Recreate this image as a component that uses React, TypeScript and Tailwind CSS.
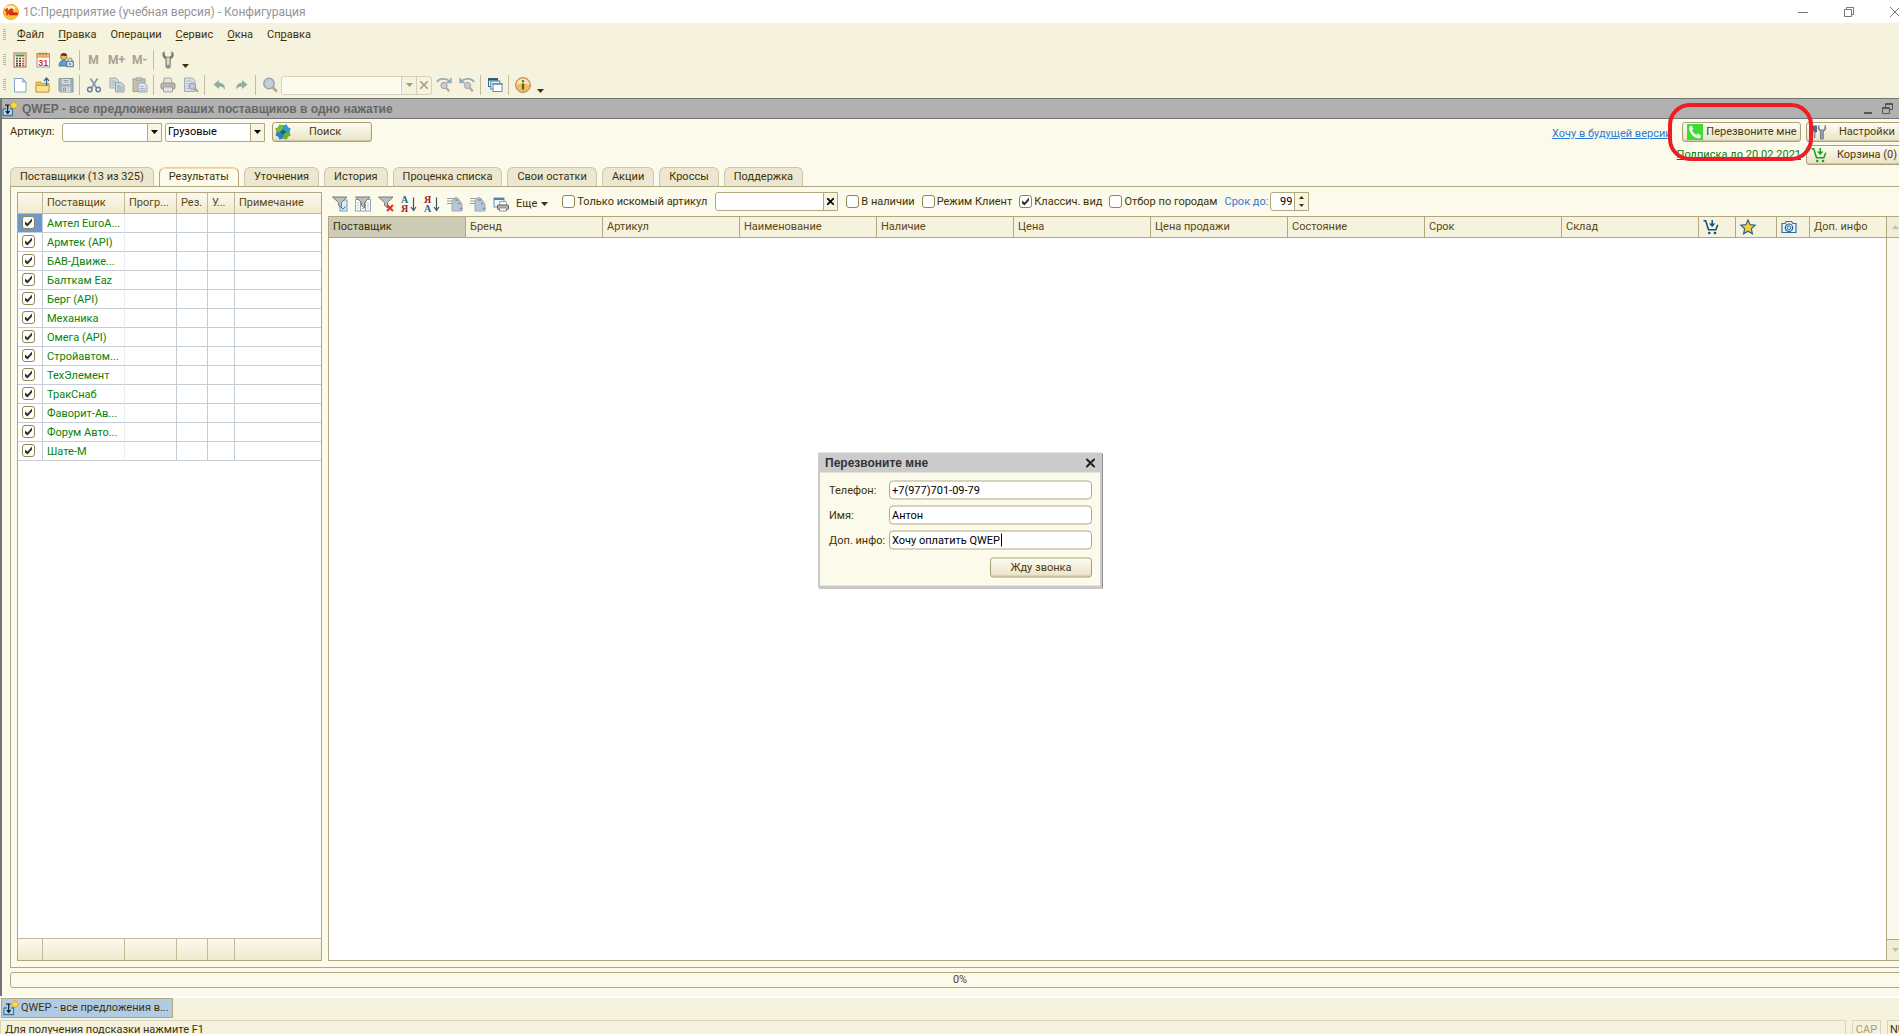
import React, { useState } from "react";

type IconProps = { children: React.ReactNode; size?: 16 | 18 };

const Icon = ({ children, size = 16 }: IconProps) => (
  <svg width={size} height={size} viewBox="0 0 16 16" fill="none" className="shrink-0 overflow-visible" aria-hidden="true">
    {children}
  </svg>
);

/* ---------- icons ---------- */

const LogoIcon = () => (
  <Icon>
    <circle cx="8" cy="8" r="7.6" fill="#f9c62d" stroke="#e2a33a" strokeWidth=".8" />
    <ellipse cx="7" cy="4" rx="5" ry="2.6" fill="#fff3c4" />
    <path d="M2 6.5 4 5v6.3M10.2 6.2a2.6 2.6 0 1 0-.6 4.2H14.6M9.6 8.4a1 1 0 1 0-1 .9h6" stroke="#d8211b" strokeWidth="1.5" />
  </Icon>
);

const CalcIcon = () => (
  <Icon>
    <rect x="2" y="1" width="12" height="14" fill="#fdf6e6" stroke="#a56a4a" />
    <rect x="3.5" y="2.5" width="9" height="2" fill="#3f9a3c" />
    <path d="M4 6.5h2M7 6.5h2M4 9h2M7 9h2M4 11.5h2M7 11.5h2M4 13.5h2M7 13.5h2" stroke="#4e433c" strokeWidth="1.3" />
    <path d="M10.3 6.5h2M10.3 9h2M10.3 11.5h2M10.3 13.5h2" stroke="#c5482d" strokeWidth="1.3" />
  </Icon>
);

const CalendarIcon = () => (
  <Icon>
    <rect x="2" y="1.5" width="12.5" height="13.5" fill="#fff" stroke="#8fa0b8" />
    <rect x="2" y="1.5" width="12.5" height="3.6" fill="#f4b46c" stroke="#d98a42" strokeWidth=".8" />
    <path d="M5 .5v2.5M8 .5v2.5M11 .5v2.5" stroke="#8b6a45" />
    <text x="8.2" y="13.6" textAnchor="middle" fontSize="9" fontWeight="bold" fill="#e8331c" fontFamily="Liberation Sans, sans-serif">31</text>
  </Icon>
);

const UserLockIcon = () => (
  <Icon>
    <path d="M1 14c0-4 2-5.5 4.5-5.5S10 10 10 14z" fill="#5e9fd0" stroke="#2f6994" strokeWidth=".8" />
    <circle cx="5.8" cy="4.6" r="3.2" fill="#f1b45c" stroke="#8b5a22" strokeWidth=".8" />
    <path d="M2.8 4C2.8 1.800 4.300 1 6 1s3 1 3 3c-2 0-4-.8-6.200 0z" fill="#5e3a1c" />
    <path d="M10 9.500V8a2 2 0 0 1 4 0v1.500" stroke="#6d8296" />
    <rect x="8.800" y="9.300" width="6.400" height="5.400" fill="#dbe7f0" stroke="#4d7191" />
    <path d="M12 11v2" stroke="#333" />
  </Icon>
);

const WrenchIcon = () => (
  <Icon size={18}>
    <path d="M4.500 1C2.800 2 3 5.500 6.300 7v6c0 2.600 3.600 2.600 3.600 0V7c3.300-1.500 3.300-5 1.600-6v3.300L9.600 5.500H6.600L4.700 4.300z" fill="#dcdcd6" stroke="#77756b" />
    <circle cx="8.100" cy="13.200" r=".9" fill="#77756b" />
  </Icon>
);

const NewIcon = () => (
  <Icon>
    <path d="M2.500 1.500h8l3.500 3.500v10H2.500z" fill="#fff" stroke="#7fa3c4" />
    <path d="M10.500 1.500V5H14z" fill="#9ec6e6" stroke="#7fa3c4" strokeWidth=".8" />
  </Icon>
);

const OpenIcon = () => (
  <Icon>
    <path d="M1 5h5l1 1.500h7V15H1z" fill="#f2bf55" stroke="#c99032" strokeWidth=".8" />
    <path d="M1 8.500h13.500L13.500 15H1z" fill="#fbe395" stroke="#c99032" strokeWidth=".8" />
    <path d="M11.500 9V2M9 4l2.500-3L14 4" stroke="#3c6482" strokeWidth="1.200" />
  </Icon>
);

const SaveIcon = () => (
  <Icon>
    <path d="M1 1.500h14V15H2.500L1 13.500z" fill="#a3b1bb" stroke="#8899a6" />
    <rect x="4" y="2" width="8" height="5" fill="#dde1da" />
    <rect x="4" y="9.500" width="8.500" height="5.500" fill="#cfd5d3" />
    <path d="M5.500 3.500h5M5.500 5.200h5M5.500 11h2v3h-2z" stroke="#8899a6" strokeWidth=".9" />
  </Icon>
);

const CutIcon = () => (
  <Icon>
    <path d="M4.500 1.500 10.500 11M11.500 1.500 5.500 11" stroke="#8c9cab" strokeWidth="1.800" />
    <circle cx="3.800" cy="12.500" r="2.200" stroke="#5f7fa0" strokeWidth="1.400" />
    <circle cx="12.200" cy="12.500" r="2.200" stroke="#5f7fa0" strokeWidth="1.400" />
  </Icon>
);

const CopyIcon = () => (
  <Icon>
    <path d="M1 1h6l2.500 2.500V11H1z" fill="#d4dadb" stroke="#9cacb8" />
    <path d="M2.500 4h4M2.500 6h5M2.500 8h5" stroke="#a9b8c4" />
    <path d="M6.500 5.500h6L15 8v7H6.500z" fill="#cdd6db" stroke="#93a5b4" />
    <path d="M8 9h4M8 11h5.500M8 13h5.500" stroke="#93a5b4" />
  </Icon>
);

const PasteIcon = () => (
  <Icon>
    <rect x="1" y="2" width="12" height="12.500" fill="#c9bfae" stroke="#a99f92" />
    <rect x="4" y=".8" width="6" height="2.800" fill="#b9c1c7" stroke="#98a4ad" strokeWidth=".8" />
    <path d="M6 6h6.500L15 8.500V15H6z" fill="#dfe4e4" stroke="#93a5b4" />
    <path d="M7.500 9.500h5M7.500 11.500h6M7.500 13.300h6" stroke="#a9b8c4" />
  </Icon>
);

const PrintIcon = () => (
  <Icon>
    <path d="M4 1h7l1.500 6h-9z" fill="#e2e4de" stroke="#a0a7ab" />
    <rect x="1" y="6" width="14" height="6" rx="1.500" fill="#b9b6b0" stroke="#96938e" />
    <path d="M3.500 10h9V15h-9z" fill="#dfe3e2" stroke="#9ba6ae" />
    <path d="M10 8h3" stroke="#cf9b8b" strokeWidth="1.200" />
  </Icon>
);

const PreviewIcon = () => (
  <Icon>
    <path d="M1.500 1h8L12 3.500V14.500H1.500z" fill="#d9dfe0" stroke="#9cacb8" />
    <path d="M3.500 4h5M3.500 6.500h3M3.500 9h3M3.500 11.500h3" stroke="#a9b8c4" />
    <circle cx="9.500" cy="9.300" r="3.200" fill="#bccbd6" stroke="#8c97a2" />
    <path d="m12 11.800 3 3" stroke="#b09a90" strokeWidth="2" />
  </Icon>
);

const UndoIcon = () => (
  <Icon>
    <path d="M2.500 7.500 8 3v2.800c4 0 6 2.200 6 7.200-1.200-2.700-3-3.500-6-3.500V12z" fill="#93aea0" />
  </Icon>
);

const RedoIcon = () => (
  <Icon>
    <path d="M13.500 7.500 8 3v2.800c-4 0-6 2.200-6 7.200 1.200-2.700 3-3.500 6-3.500V12z" fill="#93aea0" />
  </Icon>
);

const SearchIcon = () => (
  <Icon>
    <circle cx="7" cy="6.500" r="5.200" fill="#c3cedb" stroke="#9aa3b0" strokeWidth="1.400" />
    <path d="m10.800 10.500 4 4" stroke="#c0a296" strokeWidth="2.600" />
  </Icon>
);

const FindNextIcon = () => (
  <Icon>
    <path d="M1 5C3 1.500 10 .5 14 4.500M14.800 1v4.300H10.500" stroke="#93aebb" strokeWidth="1.800" />
    <circle cx="8" cy="8.500" r="3.200" fill="#c9c9d3" stroke="#aaa3a8" />
    <path d="m10.300 11 3 3.300" stroke="#c0a296" strokeWidth="2.200" />
  </Icon>
);

const FindPrevIcon = () => (
  <Icon>
    <path d="M15 5C13 1.500 6 .5 2 4.500M1.200 1v4.300h4.300" stroke="#93aebb" strokeWidth="1.800" />
    <circle cx="8.500" cy="8.500" r="3.200" fill="#c9c9d3" stroke="#aaa3a8" />
    <path d="m10.800 11 3 3.300" stroke="#c0a296" strokeWidth="2.200" />
  </Icon>
);

const WindowsIcon = () => (
  <Icon>
    <rect x="1.500" y="1.500" width="9" height="8" fill="#eaf3fa" stroke="#3d6f93" />
    <path d="M1 2.500h10" stroke="#2a597c" strokeWidth="2" />
    <rect x="3.800" y="4" width="9" height="8" fill="#eaf3fa" stroke="#4a7fa5" />
    <rect x="6" y="6.500" width="9" height="8" fill="#fff" stroke="#5c90b5" />
    <path d="M5.500 7h10" stroke="#5c90b5" strokeWidth="1.500" />
  </Icon>
);

const InfoIcon = () => (
  <Icon>
    <circle cx="8" cy="8" r="7.400" fill="#f8b95d" stroke="#a8845c" strokeWidth="1" />
    <path d="M8 1.500A6.500 6.500 0 0 0 1.500 8C5 6 11 6 14.500 8A6.500 6.500 0 0 0 8 1.500z" fill="#fbe3bd" />
    <path d="M8 3.200v2M8 6.500v6" stroke="#3f7020" strokeWidth="2.200" />
  </Icon>
);

const FormIcon = () => (
  <Icon>
    <path d="M1 8h3M8 8h2.500v6.500H1V8" fill="#b9dcf2" stroke="#3f7ea6" strokeWidth="1.300" />
    <path d="M3 4h4.500M5.700 4v8M3.700 10l2 2.300 2-2.300" stroke="#151515" strokeWidth="1.200" />
    <path d="m12 .5 3.800 3.700L12 8 8.200 4.200z" fill="#ffd93c" stroke="#c99b1d" strokeWidth=".8" />
  </Icon>
);

const PuzzleIcon = () => (
  <Icon>
    <path d="M4.500.5 8 1.500l3.500-1 1.500 3 2.500 1L14.500 8l1 3.500-2.500 1-1.500 3-3.500-1-3.500 1-1.500-3-2.500-1L1.500 8l-1-3.500 2.500-1z" fill="#2d7fc4" />
    <path d="M4.500.5 8 1.500V5L5 8H1.500l-1-3.500 2.500-1z" fill="#7cba32" />
    <path d="m8 1.500 3.500-1 1.500 3 2.500 1L14.500 8H11L8 5z" fill="#27a0dc" />
    <path d="M14.500 8l1 3.500-2.500 1-1.500 3-3.500-1V11l3-3z" fill="#6fb02c" />
    <path d="M8 4.500 9 7l2.500 1L9 9l-1 2.500L7 9 4.500 8 7 7z" fill="#165a8c" />
  </Icon>
);

const PhoneIcon = () => (
  <Icon>
    <rect width="16" height="16" fill="#3ddc32" />
    <path d="M2.800 2.300 4.600 1.600 6.300 4.800 5 6.500c.8 1.800 2.300 3.400 4.300 4.400l1.700-1.300 3.200 2.200-.9 2c-1.500 1.300-5 .4-7.600-2.200S1.300 4.200 2.800 2.300z" fill="#fff" />
  </Icon>
);

const ToolsIcon = () => (
  <Icon>
    <path d="M1 1.500h5v6L4.500 9 1 6.500z" fill="#566b80" />
    <path d="M8 1.500C6.500 4 7.500 6.500 9.500 7.500V15h2.800V7.500C14.500 6.500 15.500 4 14 1.500V5L12.500 6H9.500L8 5z" fill="#9aa7b4" stroke="#59697a" strokeWidth=".8" />
    <path d="M3.500 8v6" stroke="#8592a0" strokeWidth="1.800" />
  </Icon>
);

const CartIcon = ({ className = "text-[#0e4f7c]" }: { className?: string }) => (
  <svg width="16" height="16" viewBox="0 0 16 16" fill="none" className={`shrink-0 ${className}`} aria-hidden="true">
    <path d="M.5 1.800h2.200l2.800 9h7.300l2-5" stroke="currentColor" strokeWidth="1.500" />
    <path d="M9.200 1v4" stroke="currentColor" strokeWidth="1.500" />
    <path d="M6 4.500 9.200 8l3.200-3.500z" fill="currentColor" />
    <circle cx="6.300" cy="14" r="1.300" fill="currentColor" />
    <circle cx="12" cy="14" r="1.300" fill="currentColor" />
  </svg>
);

const StarIcon = () => (
  <Icon>
    <path d="m8 1 2.100 4.700 5 .5-3.800 3.500 1.100 5L8 12.200l-4.400 2.500 1.100-5L.9 6.200l5-.5z" fill="#f6cf33" stroke="#2d6688" strokeWidth="1.200" />
  </Icon>
);

const CameraIcon = () => (
  <Icon>
    <path d="M1 4.500h3L5.500 2.500h5L12 4.500h3v9H1z" stroke="#2a6ea3" strokeWidth="1.200" fill="#eef4f5" />
    <circle cx="8" cy="8.700" r="3.700" stroke="#1d5f96" strokeWidth="1.200" />
    <circle cx="8" cy="8.700" r="1.800" stroke="#1d5f96" />
  </Icon>
);

const Funnel = () => (
  <path d="M.5 1h14.500L9.500 6.500v5.500L6.500 9.500V6.500z" fill="#bdbdbd" stroke="#6f6f6f" strokeWidth=".9" />
);

const FilterEditIcon = () => (
  <Icon>
    <rect x="8" y="4" width="7" height="11" fill="#dcecf6" stroke="#6fa0c0" />
    <Funnel />
    <path d="m10 12 1.200 1.200L13.500 10.500" stroke="#2f6d95" />
  </Icon>
);

const FilterTableIcon = () => (
  <Icon>
    <rect x=".5" y="3.500" width="15" height="11.500" fill="#fff" stroke="#8ea2b2" />
    <path d="M5.500 4v11M10.500 4v11" stroke="#8ea2b2" />
    <path d="M2 7h2M2 9.500h2M2 12h2M7 12.500h2M12 7h2M12 9.500h2M12 12h2" stroke="#a9b8c4" />
    <Funnel />
  </Icon>
);

const FilterClearIcon = () => (
  <Icon>
    <Funnel />
    <path d="m9 9 6 6M15 9l-6 6" stroke="#dd3021" strokeWidth="2" />
  </Icon>
);

const SortIcon = ({ first, last, desc }: { first: string; last: string; desc?: boolean }) => (
  <Icon>
    <text x="0" y="7.300" fontSize="10" fontWeight="bold" fill={desc ? "#a3211b" : "#1c648c"} fontFamily="Liberation Serif, serif">{first}</text>
    <text x="0" y="15.600" fontSize="10" fontWeight="bold" fill={desc ? "#1c648c" : "#a3211b"} fontFamily="Liberation Serif, serif">{last}</text>
    <path d="M12.500 1.500v12M10 11l2.500 3.500L15 11" stroke="#33566c" strokeWidth="1.200" />
  </Icon>
);

const CopyRowsIcon = () => (
  <Icon>
    <path d="M0 2.500h8M0 5h5M0 7.500h5" stroke="#9c9f9f" />
    <path d="M5 4.500 9 1l3 2.500L15 8v7H5z" fill="#b6c6d4" stroke="#9aaab6" />
    <path d="M8 4h3M11 7.500h2M12.500 12.500h3" stroke="#7f8f9c" strokeWidth="1.300" />
  </Icon>
);

const PrintTableIcon = () => (
  <Icon>
    <rect x="1" y="2" width="10" height="9" fill="#f3f8fb" stroke="#5991b6" />
    <path d="M1 3h10" stroke="#4d86ac" strokeWidth="2" />
    <path d="M7 5.500h6l1 4H6z" fill="#fff" stroke="#888" strokeWidth=".8" />
    <rect x="4.500" y="9" width="11" height="4.500" rx="1" fill="#b5b5b1" stroke="#5e5e5a" />
    <path d="M6.500 12h7v3h-7z" fill="#fff" stroke="#777" strokeWidth=".8" />
  </Icon>
);

const Caret = () => (
  <svg width="7" height="4" viewBox="0 0 7 4" className="shrink-0" aria-hidden="true">
    <path d="M0 0h7L3.500 4z" fill="currentColor" />
  </svg>
);

/* ---------- small parts ---------- */

const Grip = () => (
  <span className="flex w-2 shrink-0 justify-center">
    <span className="h-3 w-[3px] bg-[repeating-linear-gradient(#b9b397_0_1px,transparent_1px_2px)]" />
  </span>
);

const Separator = () => (
  <span className="flex w-[5px] shrink-0 justify-center">
    <span className="h-5 w-px bg-[#c4bc98]" />
  </span>
);

const ToolButton = ({ label, children }: { label: string; children: React.ReactNode }) => (
  <button type="button" aria-label={label} className="flex h-5 w-[23px] shrink-0 items-center justify-center">
    {children}
  </button>
);

const Check = ({ label, text, checked = false }: { label: string; text?: string; checked?: boolean }) => {
  const [on, setOn] = useState(checked);

  return (
    <label className="flex items-center gap-0.5 whitespace-nowrap">
      <span className="grid">
        <input
          type="checkbox"
          aria-label={label}
          checked={on}
          onChange={() => setOn(!on)}
          className="peer col-start-1 row-start-1 size-[13px] appearance-none rounded-[3px] border border-[#8f8658] bg-white"
        />
        <svg
          viewBox="0 0 13 13"
          className="pointer-events-none invisible col-start-1 row-start-1 size-[13px] peer-checked:visible"
          aria-hidden="true"
        >
          <path d="M3 5.500v3l2.500 2L10 5.500v-3L5.500 7.500z" fill="#333" />
        </svg>
      </span>
      {text}
    </label>
  );
};

const BevelButton = ({ icon, text, className }: { icon?: React.ReactNode; text: string; className: string }) => (
  <button
    type="button"
    className={`flex h-5 items-center whitespace-nowrap rounded-[3px] border border-[#aaa077] bg-linear-to-b from-[#fdfcf4] to-[#e9e3c6] text-[#4d3a0c] shadow-[inset_0_-1px_1px_#cfc79f] ${className}`}
  >
    {icon}
    <span className="flex-1 text-center">{text}</span>
  </button>
);

/* ---------- data ---------- */

const menu: [string, string, string][] = [
  ["", "Ф", "айл"],
  ["", "П", "равка"],
  ["Операции", "", ""],
  ["", "С", "ервис"],
  ["", "О", "кна"],
  ["Сп", "р", "авка"],
];

const tabs = [
  "Поставщики (13 из 325)",
  "Результаты",
  "Уточнения",
  "История",
  "Проценка списка",
  "Свои остатки",
  "Акции",
  "Кроссы",
  "Поддержка",
];

const suppliers = [
  "Амтел EuroA...",
  "Армтек (API)",
  "БАВ-Движе...",
  "Балткам Eaz",
  "Берг (API)",
  "Механика",
  "Омега (API)",
  "Стройавтом...",
  "ТехЭлемент",
  "ТракСнаб",
  "Фаворит-Ав...",
  "Форум Авто...",
  "Шате-М",
];

const resultColumns = [
  "Бренд",
  "Артикул",
  "Наименование",
  "Наличие",
  "Цена",
  "Цена продажи",
  "Состояние",
  "Срок",
  "Склад",
];

/* ---------- blocks ---------- */

const TitleBar = () => (
  <header className="flex h-[23px] shrink-0 items-center bg-white pl-[3px] pr-0.5 text-[#949494]">
    <LogoIcon />
    <h1 className="ml-1 flex-1 text-[12px]">
      1С:Предприятие (учебная версия) - Конфигурация
    </h1>
    <button type="button" aria-label="Свернуть" className="flex w-[46px] justify-center">
      <svg width="10" height="10" fill="none" stroke="#777"><path d="M0 5.500h10" /></svg>
    </button>
    <button type="button" aria-label="Развернуть" className="flex w-[46px] justify-center">
      <svg width="10" height="10" fill="none" stroke="#777"><path d="M.5 2.500h7v7h-7zM2.500 2.500v-2h7v7h-2" /></svg>
    </button>
    <button type="button" aria-label="Закрыть" className="flex w-[46px] justify-center">
      <svg width="10" height="10" fill="none" stroke="#777"><path d="m0 0 10 10M10 0 0 10" /></svg>
    </button>
  </header>
);

const MenuBar = () => (
  <nav className="flex h-6 shrink-0 items-center">
    <Grip />
    <div className="flex gap-3.5 pl-[9px]">
      {menu.map(([before, key, after]) => (
        <button type="button" key={before + key + after}>
          {before}
          <span className="underline underline-offset-2">{key}</span>
          {after}
        </button>
      ))}
    </div>
  </nav>
);

const Toolbars = () => (
  <>
    <div className="flex h-[25px] shrink-0 items-center">
      <Grip />
      <ToolButton label="Калькулятор"><CalcIcon /></ToolButton>
      <ToolButton label="Календарь"><CalendarIcon /></ToolButton>
      <ToolButton label="Пользователь"><UserLockIcon /></ToolButton>
      <Separator />
      {["M", "M+", "M-"].map((m) => (
        <button type="button" key={m} className="w-[23px] shrink-0 text-center text-[12px] font-bold text-[#aca094]">
          {m}
        </button>
      ))}
      <Separator />
      <ToolButton label="Сервис"><WrenchIcon /></ToolButton>
      <button type="button" aria-label="Другие кнопки" className="flex h-5 w-3 items-end justify-center pb-0.5">
        <Caret />
      </button>
    </div>

    <div className="flex h-[26px] shrink-0 items-center">
      <Grip />
      <ToolButton label="Новый"><NewIcon /></ToolButton>
      <ToolButton label="Открыть"><OpenIcon /></ToolButton>
      <ToolButton label="Сохранить"><SaveIcon /></ToolButton>
      <Separator />
      <ToolButton label="Вырезать"><CutIcon /></ToolButton>
      <ToolButton label="Копировать"><CopyIcon /></ToolButton>
      <ToolButton label="Вставить"><PasteIcon /></ToolButton>
      <Separator />
      <ToolButton label="Печать"><PrintIcon /></ToolButton>
      <ToolButton label="Просмотр"><PreviewIcon /></ToolButton>
      <Separator />
      <ToolButton label="Отменить"><UndoIcon /></ToolButton>
      <ToolButton label="Вернуть"><RedoIcon /></ToolButton>
      <Separator />
      <ToolButton label="Найти"><SearchIcon /></ToolButton>
      <div className="flex h-[19px] w-[151px] items-stretch rounded-[3px] border border-[#d6d1b6] text-[#a09a83]">
        <input aria-label="Строка поиска" className="min-w-0 flex-1 rounded-l-[3px] border border-white bg-[#fcfaeb]" />
        <button type="button" aria-label="Список" className="flex w-[15px] items-center justify-center border-l border-[#d6d1b6]">
          <Caret />
        </button>
        <button type="button" aria-label="Очистить" className="flex w-[15px] items-center justify-center border-l border-[#d6d1b6]">
          <svg width="8" height="8" stroke="currentColor" strokeWidth="1.500"><path d="m0 0 8 8M8 0 0 8" /></svg>
        </button>
      </div>
      <ToolButton label="Найти далее"><FindNextIcon /></ToolButton>
      <ToolButton label="Найти назад"><FindPrevIcon /></ToolButton>
      <Separator />
      <ToolButton label="Окна"><WindowsIcon /></ToolButton>
      <Separator />
      <ToolButton label="Информация"><InfoIcon /></ToolButton>
      <button type="button" aria-label="Другие кнопки" className="flex h-5 w-3 items-end justify-center pb-0.5">
        <Caret />
      </button>
    </div>
  </>
);

const SearchRow = () => (
  <div className="flex h-[48px] shrink-0 items-start justify-between pl-2 pr-3 pt-[3px]">
    <div className="flex items-center">
      <label htmlFor="article" className="w-[52px]">Артикул:</label>
      <div className="flex h-[19px] w-[100px] rounded-l-[3px] border border-[#b2a880] bg-white">
        <input id="article" className="min-w-0 flex-1" />
        <button type="button" aria-label="Выбрать" className="flex w-3.5 items-center justify-center border-l border-[#b2a880] bg-[#f8f5e3] text-black">
          <Caret />
        </button>
      </div>
      <div className="ml-[3px] grid h-[19px] w-[100px] rounded-l-[3px] border border-[#b2a880] bg-white text-black">
        <select aria-label="Тип" className="col-start-1 row-start-1 appearance-none pl-0.5">
          <option>Грузовые</option>
          <option>Легковые</option>
        </select>
        <span className="pointer-events-none col-start-1 row-start-1 flex w-3.5 items-center justify-center justify-self-end border-l border-[#b2a880] bg-[#f8f5e3]">
          <Caret />
        </span>
      </div>
      <BevelButton icon={<PuzzleIcon />} text="Поиск" className="ml-[7px] w-[100px] pl-0.5 pr-3" />
    </div>

    <div className="flex gap-[5px]">
      <a href="#future" className="mt-1 text-[#2e7bd6] underline">Хочу в будущей версии</a>
      <div className="flex flex-col items-end gap-[5px]">
        <div className="relative">
          <BevelButton icon={<PhoneIcon />} text="Перезвоните мне" className="w-[119px] pl-1" />
          <span className="pointer-events-none absolute -inset-y-[19px] -left-3.5 -right-3 z-10 rounded-[22px] border-4 border-[#ee1c24]" />
        </div>
        <a href="#subscription" className="text-[#0a7a0a] underline">Подписка до 20.02.2021</a>
      </div>
      <div className="flex flex-col gap-[3px]">
        <BevelButton icon={<ToolsIcon />} text="Настройки" className="w-[102px] pl-1" />
        <BevelButton icon={<CartIcon className="text-[#12a01c]" />} text="Корзина (0)" className="w-[102px] pl-1" />
      </div>
    </div>
  </div>
);

const SupplierTable = () => {
  const head = "border-r border-[#c2ba94] px-1 text-left font-normal";
  const cell = "border-b border-r border-[#c5ced4]";

  return (
    <div className="flex w-[305px] shrink-0 flex-col border border-[#b2a880] bg-white">
      <table className="w-full table-fixed border-separate border-spacing-0">
        <colgroup>
          <col className="w-[25px]" />
          <col className="w-[82px]" />
          <col className="w-[52px]" />
          <col className="w-[31px]" />
          <col className="w-[27px]" />
          <col />
        </colgroup>
        <thead>
          <tr className="h-[21px] whitespace-nowrap bg-linear-to-b from-[#fbf9ef] to-[#f0e9cd] text-[#5b4714]">
            <th className="border-b border-r border-[#c2ba94]" />
            {["Поставщик", "Прогр...", "Рез.", "У..."].map((name) => (
              <th key={name} className={`${head} border-b`}>{name}</th>
            ))}
            <th className="border-b border-[#c2ba94] px-1 text-left font-normal">Примечание</th>
          </tr>
        </thead>
        <tbody>
          {suppliers.map((name, i) => (
            <tr key={name} className="h-[19px]">
              <td className={`${cell} pb-0.5 pl-1 ${i === 0 ? "bg-[#6d97d1]" : ""}`}>
                <Check label={name} checked />
              </td>
              <td className="whitespace-nowrap border-b border-r border-b-[#c5ced4] border-r-[#ececec] px-1 pt-0.5 text-[#0a820a]">
                {name}
              </td>
              <td className={cell} />
              <td className={cell} />
              <td className={cell} />
              <td className="border-b border-[#c5ced4]" />
            </tr>
          ))}
        </tbody>
      </table>
      <div className="mt-auto flex h-[22px] border-t border-[#c2ba94] bg-linear-to-b from-[#fbf9ef] to-[#f0e9cd]">
        <span className="w-[25px] border-r border-[#c2ba94]" />
        <span className="w-[82px] border-r border-[#c2ba94]" />
        <span className="w-[52px] border-r border-[#c2ba94]" />
        <span className="w-[31px] border-r border-[#c2ba94]" />
        <span className="w-[27px] border-r border-[#c2ba94]" />
      </div>
    </div>
  );
};

const ResultToolbar = () => (
  <div className="flex h-6 shrink-0 items-start">
    <div className="flex items-center pt-0.5">
      <ToolButton label="Отбор"><FilterEditIcon /></ToolButton>
      <ToolButton label="Отбор по значению"><FilterTableIcon /></ToolButton>
      <ToolButton label="Отключить отбор"><FilterClearIcon /></ToolButton>
      <ToolButton label="По возрастанию"><SortIcon first="А" last="Я" /></ToolButton>
      <ToolButton label="По убыванию"><SortIcon first="Я" last="А" desc /></ToolButton>
      <ToolButton label="Копировать строку"><CopyRowsIcon /></ToolButton>
      <ToolButton label="Копировать таблицу"><CopyRowsIcon /></ToolButton>
      <ToolButton label="Вывести список"><PrintTableIcon /></ToolButton>
      <button type="button" className="ml-1 flex items-center gap-1">
        Еще <Caret />
      </button>
    </div>
    <div className="flex h-[19px] items-center pl-3.5">
      <Check label="Только искомый артикул" text="Только искомый артикул" />
      <div className="ml-2 flex h-[19px] w-[123px] rounded-l-[3px] border border-[#b2a880] bg-white">
        <input aria-label="Артикул для отбора" className="min-w-0 flex-1" />
        <button type="button" aria-label="Очистить" className="flex w-3.5 items-center justify-center border-l border-[#b2a880] bg-[#f8f5e3]">
          <svg width="7" height="7" stroke="#000" strokeWidth="1.700"><path d="m0 0 7 7M7 0 0 7" /></svg>
        </button>
      </div>
      <div className="flex items-center gap-[7px] pl-2">
        <Check label="В наличии" text="В наличии" />
        <Check label="Режим Клиент" text="Режим Клиент" />
        <Check label="Классич. вид" text="Классич. вид" checked />
        <Check label="Отбор по городам" text="Отбор по городам" />
        <label htmlFor="term" className="text-[#2e7bd6]">Срок до:</label>
      </div>
      <div className="ml-0.5 flex h-[19px] w-[39px] rounded-l-[3px] border border-[#b2a880] bg-white">
        <input id="term" defaultValue="99" className="min-w-0 flex-1 pr-0.5 text-right text-black" />
        <span className="flex w-3.5 flex-col items-center justify-between border-l border-[#b2a880] bg-[#f8f5e3] py-[3px]">
          <svg width="5" height="3" fill="currentColor"><path d="M0 3h5L2.500 0z" /></svg>
          <svg width="5" height="3" fill="currentColor"><path d="M0 0h5L2.500 3z" /></svg>
        </span>
      </div>
    </div>
  </div>
);

const ResultTable = () => {
  const cell = "border-b border-r border-[#b2a880] px-1 text-left font-normal";

  return (
    <div className="flex min-h-0 flex-1 border border-[#b2a880] bg-white">
      <div className="min-w-0 flex-1 border-r border-[#b2a880]">
        <table className="w-full table-fixed border-separate border-spacing-0">
          <thead>
            <tr className="h-[21px] whitespace-nowrap bg-[#f5f2dd] text-[#5b4714]">
              <th className={`${cell} bg-[#cecbb7] text-[#3c2e08]`}>Поставщик</th>
              {resultColumns.map((name) => (
                <th key={name} className={cell}>{name}</th>
              ))}
              <th className={`${cell} w-[37px]`}><CartIcon /></th>
              <th className={`${cell} w-[41px]`}><StarIcon /></th>
              <th className={`${cell} w-[33px]`}><CameraIcon /></th>
              <th className="w-[76px] border-b border-[#b2a880] px-1 text-left font-normal">Доп. инфо</th>
            </tr>
          </thead>
        </table>
      </div>
      <div className="flex w-[17px] flex-col items-center justify-between bg-[#faf8ef] text-[#c4c0ae]">
        <button type="button" aria-label="Вверх" className="flex h-[21px] w-full rotate-180 items-center justify-center border-t border-[#b2a880] bg-[#f2eed6]">
          <Caret />
        </button>
        <button type="button" aria-label="Вниз" className="flex h-[21px] w-full items-center justify-center border-t border-[#b2a880] bg-[#f2eed6]">
          <Caret />
        </button>
      </div>
    </div>
  );
};

const CallbackDialog = () => {
  const input = "h-[19px] min-w-0 flex-1 rounded-[4px] border border-[#b2a880] bg-white px-0.5 text-black outline-none";

  return (
    <section
      role="dialog"
      aria-labelledby="callback-title"
      className="absolute left-1/2 top-1/2 w-[284px] -translate-x-1/2 -translate-y-1/2 border-2 border-t-0 border-[#cbcbcb] bg-[#fcfaeb] shadow-[1px_1px_0_#8f8f8f]"
    >
      <div className="flex h-5 items-center justify-between bg-[#cbcbcb] pl-[5px] pr-[5px]">
        <h2 id="callback-title" className="font-['Liberation_Sans',sans-serif] text-[12px] font-bold text-[#333]">Перезвоните мне</h2>
        <button type="button" aria-label="Закрыть">
          <svg width="9" height="9" stroke="#222" strokeWidth="2"><path d="m0 0 9 9M9 0 0 9" /></svg>
        </button>
      </div>
      <form className="flex flex-col gap-1.5 py-2 pl-[9px] pr-2" onSubmit={(e) => e.preventDefault()}>
        <div className="flex items-center">
          <label htmlFor="phone" className="w-[60px]">Телефон:</label>
          <input id="phone" type="tel" defaultValue="+7(977)701-09-79" className={input} />
        </div>
        <div className="flex items-center">
          <label htmlFor="name" className="w-[60px]">Имя:</label>
          <input id="name" defaultValue="Антон" className={input} />
        </div>
        <div className="flex items-center">
          <label htmlFor="info" className="w-[60px] whitespace-nowrap">Доп. инфо:</label>
          <span className="relative flex flex-1">
            <input id="info" defaultValue="Хочу оплатить QWEP" className={`${input} caret-transparent`} />
            {/* text cursor */}
            <span className="pointer-events-none absolute inset-y-[3px] left-28 w-px bg-black" />
          </span>
        </div>
        <BevelButton text="Жду звонка" className="mt-0.5 w-[102px] self-end" />
      </form>
    </section>
  );
};

const App: React.FC = () => {
  const [active, setActive] = useState("Результаты");

  return (
    <div className="h-screen overflow-hidden bg-[#f5f2dd]">
      {/* the window is a bit larger than the visible screen */}
      <div className="relative -mr-[21px] flex h-[calc(100%+6px)] flex-col font-[Roboto,sans-serif] text-[11px] leading-4 text-[#3f3106]">
        <TitleBar />
        <MenuBar />
        <Toolbars />

        <main className="flex min-h-0 flex-1 flex-col border-l-2 border-t border-[#747474] bg-[#fcfaeb]">
          <div className="flex h-5 shrink-0 items-center border-b border-[#747474] bg-[#b1b1b1] pr-1 text-[#666]">
            <FormIcon />
            <h2 className="ml-1 flex-1 font-['Liberation_Sans',sans-serif] text-[12px] font-bold">
              QWEP - все предложения ваших поставщиков в одно нажатие
            </h2>
            <div className="flex items-center gap-2.5 pr-[23px]">
              <button type="button" aria-label="Свернуть окно">
                <svg width="8" height="11" stroke="#555" strokeWidth="2"><path d="M0 10h8" /></svg>
              </button>
              <button type="button" aria-label="Развернуть окно">
                <svg width="11" height="11" fill="none" stroke="#555"><path d="M.5 4.500h7v6h-7zM.5 5.500h7M3.500 4v-3.500h7v6H8M3.500 1.500h7" /></svg>
              </button>
            </div>
          </div>

          <SearchRow />

          <div className="flex min-h-0 flex-1 flex-col pl-2 pr-2.5">
            <div role="tablist" className="flex shrink-0 gap-[5px]">
              {tabs.map((tab) => (
                <button
                  type="button"
                  role="tab"
                  key={tab}
                  aria-selected={tab === active}
                  onClick={() => setActive(tab)}
                  className={`h-[19px] whitespace-nowrap rounded-t-md border border-b-0 px-[9px] ${
                    tab === active
                      ? "relative -mb-px border-[#b2a880] border-t-[#f3cf8c] bg-[#fcfaeb] shadow-[inset_0_1px_0_#f8ddab]"
                      : "border-[#cdc6a6] bg-[#ece7d0]"
                  }`}
                >
                  {tab}
                </button>
              ))}
            </div>

            <div className="flex min-h-0 flex-1 gap-1.5 border border-[#b2a880] pb-1.5 pl-1.5 pr-1 pt-[5px]">
              <SupplierTable />
              <div className="flex min-w-0 flex-1 flex-col">
                <ResultToolbar />
                <ResultTable />
              </div>
            </div>
          </div>

          <div className="mb-2 ml-2 mr-2.5 mt-1 flex h-4 shrink-0 items-center justify-center rounded-[3px] border border-[#b2a880] text-[#5b4714]">
            0%
          </div>
        </main>

        <div className="flex h-6 shrink-0 items-start border-t-2 border-white pl-px">
          <button type="button" className="flex h-5 w-[172px] items-center gap-0.5 whitespace-nowrap border border-[#b2a880] bg-[#b2cbe5] pl-px">
            <FormIcon />
            QWEP - все предложения в...
          </button>
        </div>

        <footer className="flex h-5 shrink-0 gap-1.5 leading-[18px]">
          <p className="flex-1 border border-[#dad6be] pl-1">Для получения подсказки нажмите F1</p>
          <p className="w-[29px] border border-[#dad6be] text-center text-[#ab9d6c]">CAP</p>
          <p className="w-[33px] border border-[#dad6be] pl-0.5">NUM</p>
        </footer>

        <CallbackDialog />
      </div>
    </div>
  );
};

export default App;
